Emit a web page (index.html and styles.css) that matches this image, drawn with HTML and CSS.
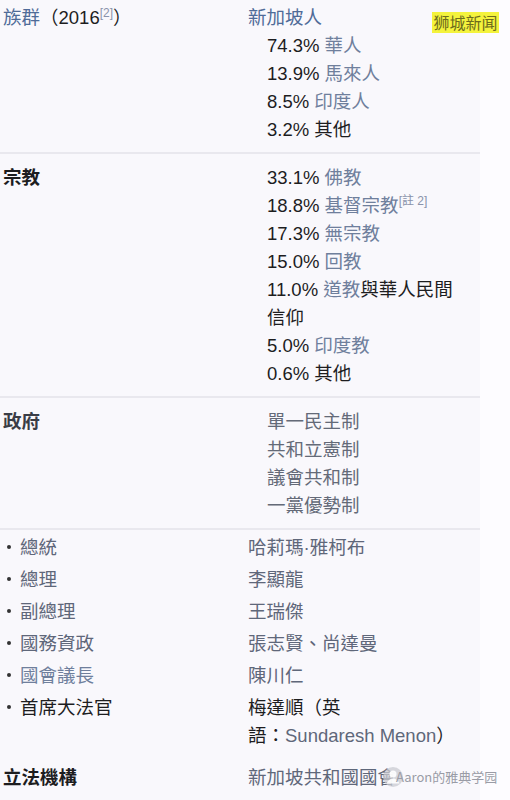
FILE: index.html
```html
<!DOCTYPE html>
<html lang="zh-Hant">
<head>
<meta charset="utf-8">
<link rel="stylesheet" href="styles.css">
</head>
<body>
<div class="page">
  <div class="infobox">
    <div class="section first">
      <div class="row">
        <div class="label"><span class="link">族群</span>（2016<sup class="ref">[2]</sup>）</div>
        <div class="value">
          <div class="link head">新加坡人</div>
          <ul class="sub">
            <li>74.3% <span class="link2">華人</span></li>
            <li>13.9% <span class="link2">馬來人</span></li>
            <li>8.5% <span class="link2">印度人</span></li>
            <li>3.2% 其他</li>
          </ul>
        </div>
      </div>
    </div>

    <div class="section">
      <div class="row">
        <div class="label bold">宗教</div>
        <div class="value">
          <ul class="sub">
            <li>33.1% <span class="link2">佛教</span></li>
            <li>18.8% <span class="link2">基督宗教</span><sup class="ref">[註 2]</sup></li>
            <li>17.3% <span class="link2">無宗教</span></li>
            <li>15.0% <span class="link2">回教</span></li>
            <li><span>11.0% </span><span class="link2">道教</span><span>與華人民間</span><br><span>信仰</span></li>
            <li>5.0% <span class="link2">印度教</span></li>
            <li>0.6% 其他</li>
          </ul>
        </div>
      </div>
    </div>

    <div class="section">
      <div class="row">
        <div class="label bold gov">政府</div>
        <div class="value">
          <ul class="sub govlist">
            <li>單一民主制</li>
            <li>共和立憲制</li>
            <li>議會共和制</li>
            <li>一黨優勢制</li>
          </ul>
        </div>
      </div>
    </div>

    <div class="section bullets">
      <div class="row brow">
        <div class="label"><span class="dot"></span><span class="muted">總統</span></div>
        <div class="value muted">哈莉瑪·雅柯布</div>
      </div>
      <div class="row brow">
        <div class="label"><span class="dot"></span><span class="muted">總理</span></div>
        <div class="value muted">李顯龍</div>
      </div>
      <div class="row brow">
        <div class="label"><span class="dot"></span><span class="muted">副總理</span></div>
        <div class="value muted">王瑞傑</div>
      </div>
      <div class="row brow">
        <div class="label"><span class="dot"></span><span class="muted">國務資政</span></div>
        <div class="value muted">張志賢、尚達曼</div>
      </div>
      <div class="row brow">
        <div class="label"><span class="dot"></span><span class="link2">國會議長</span></div>
        <div class="value muted">陳川仁</div>
      </div>
      <div class="row brow">
        <div class="label"><span class="dot"></span>首席大法官</div>
        <div class="value">梅達順（英<br>語：<span class="muted">Sundaresh Menon</span>）</div>
      </div>
    </div>

    <div class="section last">
      <div class="row">
        <div class="label bold">立法機構</div>
        <div class="value muted">新加坡共和國國會</div>
      </div>
    </div>
  </div>

  <div class="wm-top">狮城新闻</div>
  <div class="wm-bottom">
    <span class="wm-icon">
      <svg width="22" height="22" viewBox="0 0 22 22"><circle cx="11" cy="11" r="10" fill="#c9cbd2" fill-opacity="0.75"/><circle cx="11" cy="8" r="3.5" fill="#ffffff" fill-opacity="0.9"/><path d="M4.5 17.5c1.5-3.5 4-5 6.5-5s5 1.5 6.5 5" fill="#ffffff" fill-opacity="0.9"/></svg>
    </span>
    <span class="wm-text">Aaron的雅典学园</span>
  </div>
</div>
</body>
</html>
```

FILE: styles.css
```css
html, body {
  margin: 0;
  padding: 0;
}

body {
  background: #fdfcff;
  font-family: "Liberation Sans", "Noto Sans CJK TC", sans-serif;
  font-size: 18.5px;
  line-height: 28px;
  color: #1d1d1f;
}

.page {
  position: relative;
  width: 510px;
  height: 800px;
  overflow: hidden;
}

.infobox {
  width: 480px;
  height: 800px;
  background: #f9f8fc;
}

.section {
  padding: 10px 0 8px;
  border-bottom: 2px solid #e9e8ee;
}

.section.first {
  padding-top: 4px;
}

.section.bullets {
  padding: 2px 0 0;
  border-bottom: none;
}

.section.last {
  padding-top: 12px;
  border-bottom: none;
}

.row {
  display: grid;
  grid-template-columns: 245px 212px;
  padding-left: 3px;
}

.brow {
  padding-top: 2px;
  padding-bottom: 2px;
}

.bold {
  font-weight: bold;
}

.gov {
  color: #3a3d46;
}

.link {
  color: #4f6b98;
}

.link2 {
  color: #6f7f9c;
}

.muted {
  color: #5f677a;
}

.ref {
  font-size: 12px;
  line-height: 0;
  color: #8a93ab;
  vertical-align: 7px;
}

.sub {
  list-style: none;
  margin: 0;
  padding: 0 0 0 19px;
}

.govlist {
  color: #646a78;
}

.value {
  min-width: 0;
}

.dot {
  display: inline-block;
  width: 4px;
  height: 4px;
  border-radius: 50%;
  background: #333;
  margin: 0 9px 0 4px;
  vertical-align: 5px;
}

.wm-top {
  position: absolute;
  left: 432px;
  top: 12px;
  width: 67px;
  height: 21px;
  background: #f4f33c;
  color: #6e6c1c;
  font-family: "Noto Sans CJK SC", sans-serif;
  font-size: 16px;
  line-height: 21px;
  text-align: center;
}

.wm-bottom {
  position: absolute;
  left: 382px;
  top: 766px;
  display: flex;
  align-items: center;
}

.wm-icon {
  display: block;
  width: 22px;
  height: 22px;
}

.wm-icon svg {
  display: block;
}

.wm-text {
  margin-left: -8px;
  font-family: "Noto Sans CJK SC", sans-serif;
  font-size: 13px;
  line-height: 20px;
  color: #9a9ca6;
}
```
